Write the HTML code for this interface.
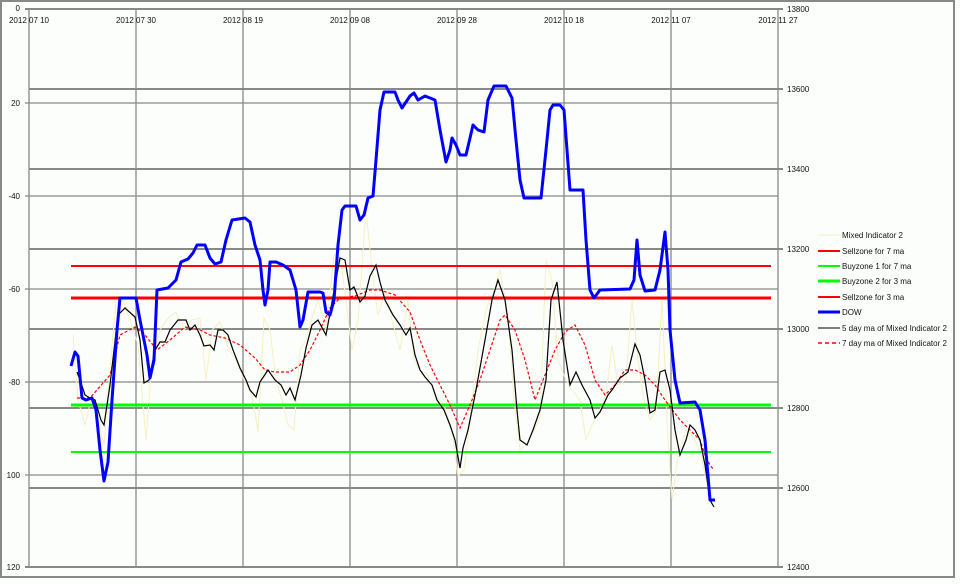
<!DOCTYPE html>
<html><head><meta charset="utf-8"><style>
html,body{margin:0;padding:0;background:#fff;}
svg{display:block}
text{font-family:"Liberation Sans",sans-serif;font-size:8px;fill:#111}
</style></head><body>
<svg width="960" height="584" viewBox="0 0 960 584" xmlns="http://www.w3.org/2000/svg">
<rect x="0" y="0" width="960" height="584" fill="#fcfefc"/>
<rect x="1" y="1" width="953" height="576" fill="none" stroke="#888" stroke-width="2"/>
<g stroke="#888" stroke-width="1.3">
<line x1="29" y1="9" x2="29" y2="567"/><line x1="136" y1="9" x2="136" y2="567"/><line x1="243" y1="9" x2="243" y2="567"/><line x1="350" y1="9" x2="350" y2="567"/><line x1="457" y1="9" x2="457" y2="567"/><line x1="564" y1="9" x2="564" y2="567"/><line x1="671" y1="9" x2="671" y2="567"/><line x1="778" y1="9" x2="778" y2="567"/>
<line x1="25" y1="103" x2="778" y2="103"/><line x1="25" y1="196" x2="778" y2="196"/><line x1="25" y1="289" x2="778" y2="289"/><line x1="25" y1="382" x2="778" y2="382"/><line x1="25" y1="475" x2="778" y2="475"/>
</g>
<g stroke="#888" stroke-width="2">
<line x1="25" y1="9" x2="783" y2="9"/><line x1="29" y1="89" x2="783" y2="89"/><line x1="29" y1="169" x2="783" y2="169"/><line x1="29" y1="249" x2="783" y2="249"/><line x1="29" y1="329" x2="783" y2="329"/><line x1="29" y1="408" x2="783" y2="408"/><line x1="29" y1="488" x2="783" y2="488"/><line x1="25" y1="567" x2="783" y2="567"/>
</g>
<g text-anchor="end">
<text x="20" y="11">0</text><text x="20" y="106">20</text><text x="20" y="199">-40</text><text x="20" y="292">-60</text><text x="20" y="385">-80</text><text x="20" y="478">100</text><text x="20" y="570">120</text>
</g>
<g>
<text x="787" y="12">13800</text><text x="787" y="92">13600</text><text x="787" y="172">13400</text><text x="787" y="252">13200</text><text x="787" y="332">13000</text><text x="787" y="411">12800</text><text x="787" y="491">12600</text><text x="787" y="570">12400</text>
</g>
<g text-anchor="middle">
<text x="29" y="23">2012 07 10</text><text x="136" y="23">2012 07 30</text><text x="243" y="23">2012 08 19</text><text x="350" y="23">2012 09 08</text><text x="457" y="23">2012 09 28</text><text x="564" y="23">2012 10 18</text><text x="671" y="23">2012 11 07</text><text x="778" y="23">2012 11 27</text>
</g>
<polyline fill="none" stroke="#f6efc0" stroke-width="1" points="73,335 78,400 85,425 92,395 98,420 104,445 110,370 116,300 122,298 130,320 138,345 146,440 152,360 160,330 168,318 176,312 184,330 192,320 200,318 206,380 212,330 220,322 228,348 236,360 244,380 252,395 258,432 264,318 270,330 276,380 282,400 288,425 294,430 300,350 306,340 312,318 318,300 326,330 334,255 340,256 346,300 352,350 358,320 366,210 372,270 378,315 386,290 392,320 400,350 408,300 414,360 420,370 428,375 436,396 444,405 452,430 458,476 464,470 470,420 478,350 486,310 494,290 500,270 508,315 514,400 520,450 526,445 534,430 540,418 546,260 552,280 558,360 566,380 572,390 580,400 586,440 592,425 600,410 606,395 612,345 618,385 626,380 632,300 638,360 644,400 650,420 656,410 662,300 668,440 672,500 678,455 686,430 692,435 700,450 706,480 712,505"/>
<line x1="71" y1="266" x2="771" y2="266" stroke="#f00" stroke-width="2"/>
<line x1="71" y1="298" x2="771" y2="298" stroke="#f00" stroke-width="3"/>
<line x1="71" y1="405" x2="771" y2="405" stroke="#0f0" stroke-width="3"/>
<line x1="71" y1="452" x2="771" y2="452" stroke="#0f0" stroke-width="2"/>
<polyline fill="none" stroke="#f00" stroke-width="1.2" stroke-dasharray="3,2" points="77,398 90,398 110,375 120,335 135,327 145,335 157,350 170,340 185,327 200,330 210,335 225,338 240,345 255,358 265,370 275,372 290,372 300,365 310,350 320,330 330,308 340,298 355,296 370,290 380,290 395,295 410,312 420,340 430,365 440,385 450,405 460,428 470,405 480,380 490,350 500,320 505,315 515,330 525,360 535,400 545,375 555,350 565,332 575,325 585,345 595,380 605,395 615,385 625,370 635,370 645,375 655,385 665,400 680,420 690,430 700,440 705,455 710,465 714,470"/>
<polyline fill="none" stroke="#000" stroke-width="1.2" points="77,372 80,380 85,395 90,398 95,400 98,410 101,420 104,425 110,385 118,315 125,308 135,317 140,340 144,383 149,380 155,350 160,342 165,342 170,330 178,320 186,320 190,330 195,325 200,335 204,346 210,345 214,350 218,330 223,330 228,335 233,350 240,368 246,380 250,390 256,397 260,382 268,370 275,380 281,385 286,395 290,388 295,400 301,375 306,348 312,325 318,320 326,335 340,258 345,260 350,290 354,287 360,302 365,296 370,276 376,265 380,282 385,300 393,315 400,325 406,335 410,328 415,355 420,370 425,377 432,385 437,400 444,410 450,425 455,440 460,468 463,448 468,430 476,390 485,340 492,300 498,280 505,300 512,350 517,410 520,440 527,445 533,430 540,410 546,380 551,300 557,282 563,340 570,385 576,372 582,385 590,400 595,418 600,412 608,395 612,390 620,378 628,372 635,344 640,355 645,380 650,413 655,410 660,372 665,370 670,390 675,430 680,455 686,440 690,425 695,430 700,440 705,465 710,500 714,507"/>
<polyline fill="none" stroke="#00f" stroke-width="3" stroke-linejoin="round" points="71,366 75,352 78,356 82,398 86,400 92,398 96,410 100,450 104,481 108,462 112,400 117,330 120,298 136,298 140,320 147,355 150,378 154,360 157,290 168,288 176,280 181,262 188,259 193,253 197,245 205,245 210,258 215,264 221,262 226,240 232,220 245,218 250,222 255,245 260,260 263,290 265,305 268,290 270,262 276,262 283,265 290,270 296,290 300,327 303,320 308,292 320,292 323,293 326,312 330,315 334,300 338,245 342,210 345,206 356,206 360,220 364,215 368,198 373,196 376,160 380,110 384,92 395,92 398,100 402,108 406,102 410,96 414,93 418,100 425,96 430,98 435,100 440,130 446,162 450,150 452,138 456,145 460,155 466,155 470,138 473,125 478,130 484,132 488,100 494,86 506,86 512,98 516,140 520,180 524,198 541,198 546,150 550,110 553,105 560,105 564,110 567,150 570,190 583,190 586,240 590,290 594,298 600,290 630,289 634,280 637,240 640,275 645,291 655,290 660,270 665,232 668,270 670,330 675,380 680,403 695,402 700,410 705,440 710,500 715,500"/>
<g>
<line x1="818" y1="235" x2="840" y2="235" stroke="#f5eec0" stroke-width="1"/><text x="842" y="238">Mixed Indicator 2</text>
<line x1="818" y1="251" x2="840" y2="251" stroke="#f00" stroke-width="2"/><text x="842" y="254">Sellzone for 7 ma</text>
<line x1="818" y1="266" x2="840" y2="266" stroke="#0f0" stroke-width="2"/><text x="842" y="269">Buyzone 1 for 7 ma</text>
<line x1="818" y1="281" x2="840" y2="281" stroke="#0f0" stroke-width="3"/><text x="842" y="284">Buyzone 2 for 3 ma</text>
<line x1="818" y1="297" x2="840" y2="297" stroke="#f00" stroke-width="2"/><text x="842" y="300">Sellzone for 3 ma</text>
<line x1="818" y1="312" x2="840" y2="312" stroke="#00f" stroke-width="3"/><text x="842" y="315">DOW</text>
<line x1="818" y1="328" x2="840" y2="328" stroke="#000" stroke-width="1"/><text x="842" y="331">5 day ma of Mixed Indicator 2</text>
<line x1="818" y1="343" x2="840" y2="343" stroke="#f00" stroke-width="1.5" stroke-dasharray="4,3"/><text x="842" y="346">7 day ma of Mixed Indicator 2</text>
</g>
</svg>
</body></html>
